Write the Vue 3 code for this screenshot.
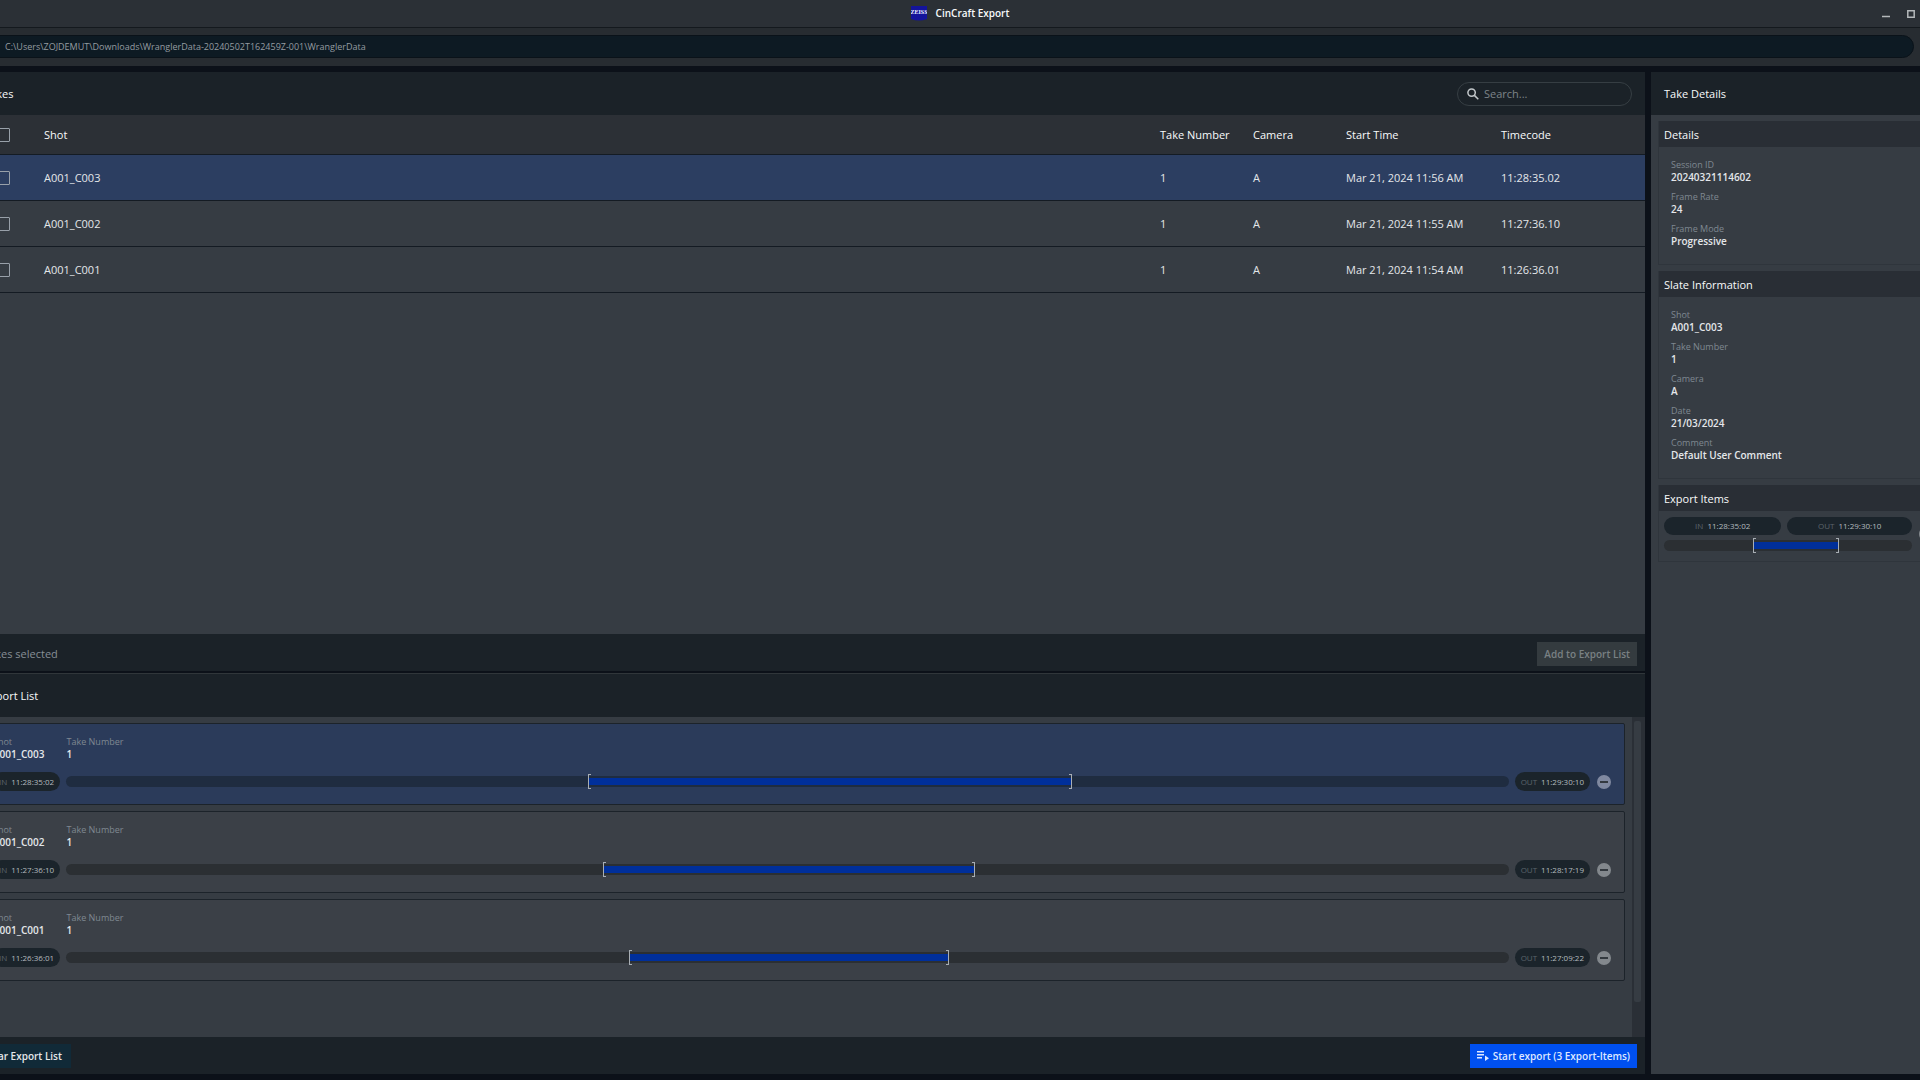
<script setup>
import { ref } from 'vue'

const path = ref('C:\\Users\\ZOJDEMUT\\Downloads\\WranglerData-20240502T162459Z-001\\WranglerData')
const search = ref('')

const takes = ref([
  { shot: 'A001_C003', take: 1, camera: 'A', start: 'Mar 21, 2024 11:56 AM', timecode: '11:28:35.02', active: true, checked: false },
  { shot: 'A001_C002', take: 1, camera: 'A', start: 'Mar 21, 2024 11:55 AM', timecode: '11:27:36.10', active: false, checked: false },
  { shot: 'A001_C001', take: 1, camera: 'A', start: 'Mar 21, 2024 11:54 AM', timecode: '11:26:36.01', active: false, checked: false },
])

const exportItems = [
  { shot: 'A001_C003', take: 1, in: '11:28:35:02', out: '11:29:30:10', left: 36.2, width: 33.5, active: true },
  { shot: 'A001_C002', take: 1, in: '11:27:36:10', out: '11:28:17:19', left: 37.2, width: 25.8, active: false },
  { shot: 'A001_C001', take: 1, in: '11:26:36:01', out: '11:27:09:22', left: 39, width: 22.2, active: false },
]

const sections = [
  {
    title: 'Details',
    fields: [
      ['Session ID', '20240321114602'],
      ['Frame Rate', '24'],
      ['Frame Mode', 'Progressive'],
    ],
  },
  {
    title: 'Slate Information',
    fields: [
      ['Shot', 'A001_C003'],
      ['Take Number', '1'],
      ['Camera', 'A'],
      ['Date', '21/03/2024'],
      ['Comment', 'Default User Comment'],
    ],
  },
]
</script>

<template>
  <div class="shell">
    <header class="titlebar">
      <div class="brand">
        <svg class="logo" viewBox="0 0 16 16" aria-hidden="true">
          <path d="M0 0h16v13q-8 3-16 0z" fill="#14149b" />
          <text x="8" y="8" text-anchor="middle" class="logo-text">ZEISS</text>
        </svg>
        <h1>CinCraft Export</h1>
      </div>
      <div class="window-buttons">
        <button type="button" aria-label="Minimize">
          <svg viewBox="0 0 10 10"><path d="M1 7.5h8" /></svg>
        </button>
        <button type="button" aria-label="Maximize">
          <svg viewBox="0 0 10 10"><path d="M1.8 1.8h6.4v6.4H1.8z" /></svg>
        </button>
        <button type="button" aria-label="Close">
          <svg viewBox="0 0 10 10"><path d="M1 1l8 8M9 1l-8 8" /></svg>
        </button>
      </div>
    </header>

    <div class="pathbar">
      <input v-model="path" class="path" type="text" aria-label="Project folder" readonly />
    </div>

    <main class="workspace">
      <div class="left">
        <section class="takes">
          <div class="panel-head">
            <h2>Takes</h2>
            <label class="search">
              <svg viewBox="0 0 12 12" aria-hidden="true">
                <circle cx="4.6" cy="4.6" r="3.7" />
                <path d="M7.4 7.4l3.9 3.9" />
              </svg>
              <input v-model="search" type="text" placeholder="Search..." aria-label="Search takes" />
            </label>
          </div>
          <div class="table-area">
            <table>
              <thead>
                <tr>
                  <th class="col-check"><input type="checkbox" aria-label="Select all takes" /></th>
                  <th>Shot</th>
                  <th class="col-narrow">Take Number</th>
                  <th class="col-narrow">Camera</th>
                  <th class="col-wide">Start Time</th>
                  <th class="col-last">Timecode</th>
                </tr>
              </thead>
              <tbody>
                <tr v-for="t in takes" :key="t.shot" :class="{ active: t.active }">
                  <td class="col-check">
                    <input v-model="t.checked" type="checkbox" :aria-label="'Select ' + t.shot" />
                  </td>
                  <td>{{ t.shot }}</td>
                  <td>{{ t.take }}</td>
                  <td>{{ t.camera }}</td>
                  <td>{{ t.start }}</td>
                  <td>{{ t.timecode }}</td>
                </tr>
              </tbody>
            </table>
          </div>
          <div class="panel-foot">
            <span class="count">0 Takes selected</span>
            <button type="button" class="btn btn-disabled" disabled>Add to Export List</button>
          </div>
        </section>

        <section class="exports">
          <div class="panel-head">
            <h2>Export List</h2>
          </div>
          <div class="list-area">
            <ul class="cards">
              <li v-for="e in exportItems" :key="e.shot" class="card" :class="{ active: e.active }">
                <dl class="meta">
                  <div><dt>Shot</dt><dd>{{ e.shot }}</dd></div>
                  <div><dt>Take Number</dt><dd>{{ e.take }}</dd></div>
                </dl>
                <div class="timeline">
                  <span class="pill"><span class="tag">IN</span>{{ e.in }}</span>
                  <div class="track">
                    <div class="range" :style="{ left: e.left + '%', width: e.width + '%' }"></div>
                  </div>
                  <span class="pill"><span class="tag">OUT</span>{{ e.out }}</span>
                  <button type="button" class="remove" :aria-label="'Remove ' + e.shot"></button>
                </div>
              </li>
            </ul>
            <div class="scrollbar"><div class="thumb"></div></div>
          </div>
          <div class="panel-foot">
            <button type="button" class="btn btn-dark">Clear Export List</button>
            <button type="button" class="btn btn-primary">
              <svg viewBox="0 0 12 12" aria-hidden="true">
                <path d="M0 1h7v1.500H0zM0 4h7v1.500H0zM0 7h5v1.500H0zM8 5.500l4 2.750-4 2.750z" />
              </svg>
              Start export (3 Export-Items)
            </button>
          </div>
        </section>
      </div>

      <aside class="right">
        <div class="panel-head"><h2>Take Details</h2></div>
        <div class="detail-body">
          <section v-for="s in sections" :key="s.title" class="box">
            <h3>{{ s.title }}</h3>
            <dl class="fields">
              <div v-for="f in s.fields" :key="f[0]"><dt>{{ f[0] }}</dt><dd>{{ f[1] }}</dd></div>
            </dl>
          </section>
          <section class="box">
            <h3>Export Items</h3>
            <div class="mini">
              <div class="mini-main">
                <div class="mini-pills">
                  <span class="pill pill-in"><span class="tag">IN</span>11:28:35:02</span>
                  <span class="pill pill-out"><span class="tag">OUT</span>11:29:30:10</span>
                </div>
                <div class="track">
                  <div class="range" :style="{ left: '36%', width: '34.500%' }"></div>
                </div>
              </div>
              <button type="button" class="remove" aria-label="Remove export item"></button>
            </div>
          </section>
        </div>
      </aside>
    </main>
  </div>
</template>

<style>
html {
  overflow: hidden;
}
body {
  margin: 0;
  background: #0c1119;
}
</style>

<style scoped>
* {
  box-sizing: border-box;
}
/* the window reaches a little past both sides of the screen */
.shell {
  display: flex;
  flex-direction: column;
  min-height: 100vh;
  margin: 0 -32px;
  background: #0c1119;
  color: #e4e7ea;
  font-family: "Segoe UI", "Open Sans", sans-serif;
  font-size: 11px;
  line-height: 14px;
}
h1, h2, h3, dl, dd, ul {
  margin: 0;
  padding: 0;
  font-size: 11px;
  font-weight: 500;
}
h1, h2, h3, th {
  color: #f8fafb;
}
ul {
  list-style: none;
}
button, input {
  font: inherit;
  color: inherit;
}

.titlebar {
  display: grid;
  grid-template-columns: 1fr auto 1fr;
  align-items: center;
  height: 28px;
  border-bottom: 1px solid #14191e;
  background: #2b3036;
}
.brand {
  grid-column: 2;
  display: flex;
  align-items: center;
  gap: 9px;
}
.brand h1 {
  font-size: 10px;
  font-weight: 600;
  line-height: 13px;
}
.logo {
  width: 16px;
  height: 16px;
}
.logo-text {
  fill: #f2f3ff;
  font-family: "Liberation Serif", serif;
  font-size: 6px;
  font-weight: 700;
}
.window-buttons {
  display: flex;
  justify-content: flex-end;
  gap: 15px;
  padding-right: 11px;
}
.window-buttons button {
  width: 10px;
  height: 10px;
  padding: 0;
  border: 0;
  background: none;
}
.window-buttons svg {
  display: block;
  fill: none;
  stroke: #b4b8bb;
  stroke-width: 1.500;
}

.pathbar {
  padding: 7px 38px 8px 6px;
  background: #272c31;
}
.path {
  display: block;
  width: 100%;
  height: 23px;
  padding: 0 30px;
  border: 1px solid #0a1219;
  border-radius: 12px;
  background: #0d1a23;
  color: #959ca1;
  font-size: 9px;
}

.workspace {
  flex: 1;
  display: flex;
  gap: 6px;
  padding: 6px;
}
.left {
  flex: 1;
  display: flex;
  flex-direction: column;
  gap: 2px;
}
.takes, .exports, .right {
  display: flex;
  flex-direction: column;
}
.takes {
  flex: 6 1 0;
}
.takes .panel-foot {
  padding-top: 2px;
}
.exports {
  flex: 4 1 0;
  border-top: 1px solid #30363a;
}
.right {
  width: 295px;
  background: #363c43;
}
.panel-head {
  display: flex;
  align-items: center;
  justify-content: space-between;
  height: 43px;
  padding: 0 13px 0 10px;
  background: #1b2228;
}
.right .panel-head {
  padding: 0 13px;
}
.panel-head h2 {
  padding-top: 1px;
}
.search {
  display: flex;
  align-items: center;
  gap: 5px;
  width: 175px;
  height: 24px;
  padding: 0 9px;
  border: 1px solid #363e43;
  border-radius: 12px;
}
.search svg {
  width: 12px;
  height: 12px;
  fill: none;
  stroke: #c3c8cb;
  stroke-width: 1.500;
}
.search input {
  flex: 1;
  min-width: 0;
  padding: 0;
  border: 0;
  outline: 0;
  background: none;
}
.search input::placeholder {
  color: #7d8488;
  opacity: 1;
}

.table-area {
  flex: 1;
  background: #363c43;
}
table {
  width: 100%;
  border-collapse: separate;
  border-spacing: 0;
  table-layout: fixed;
}
th, td {
  padding: 0;
  border-bottom: 1px solid #141b23;
  text-align: left;
}
th {
  height: 40px;
  padding-top: 1px;
  background: #2c3036;
  font-weight: 500;
}
td {
  height: 46px;
}
.active td {
  background: #2c3e61;
}
.col-check {
  width: 70px;
  padding-left: 22px;
}
.col-narrow {
  width: 93px;
}
.col-wide {
  width: 155px;
}
.col-last {
  width: 144px;
}
input[type="checkbox"] {
  display: block;
  width: 14px;
  height: 14px;
  margin: 0;
  border: 1px solid #98a0a9;
  border-radius: 1px;
  appearance: none;
}
input[type="checkbox"]:checked {
  background: #0050f0;
}

.panel-foot {
  display: flex;
  align-items: center;
  justify-content: space-between;
  height: 37px;
  padding: 0 8px 0 0;
  background: #1b2228;
}
.count {
  color: #878f96;
}
.btn {
  display: flex;
  align-items: center;
  gap: 4px;
  height: 24px;
  padding: 0 7px;
  border: 0;
  font-size: 10px;
  font-weight: 600;
}
.btn-disabled {
  background: #343b3f;
  color: #7a8184;
}
.btn-dark {
  padding: 0 9px;
  background: #112a38;
}
.btn-primary {
  background: #0050f0;
  color: #dfe8ff;
}
.btn svg {
  width: 12px;
  height: 12px;
  fill: currentColor;
}

.list-area {
  flex: 1;
  display: flex;
  background: #363c43;
}
.cards {
  flex: 1;
  display: flex;
  flex-direction: column;
  gap: 6px;
  padding: 6px 7px 6px 6px;
}
.card {
  padding: 11px 13px 13px 12px;
  border: 1px solid #1c232a;
  border-radius: 2px;
  background: #3b4047;
}
.card.active {
  background: #2b3b5a;
}
.meta {
  display: flex;
  gap: 22px;
  margin-bottom: 11px;
}
dt {
  color: #7f8891;
  font-size: 9px;
  font-weight: 400;
  line-height: 13px;
}
dd {
  font-size: 10px;
  font-weight: 600;
  line-height: 13px;
}
.timeline {
  display: flex;
  align-items: center;
  gap: 6px;
}
.pill {
  display: flex;
  align-items: center;
  justify-content: center;
  gap: 4px;
  height: 19px;
  padding: 0 6px;
  border-radius: 10px;
  background: #1b242b;
  color: #b4bbbf;
  font-size: 8px;
}
.tag {
  color: #5c656c;
}
.track {
  position: relative;
  flex: 1;
  height: 11px;
  border-radius: 6px;
  background: #2b2f33;
}
.active .track {
  background: #1f2c40;
}
/* blue span between the in and out brackets */
.range {
  position: absolute;
  top: 2px;
  bottom: 2px;
  background: #002f9b;
}
.range::before, .range::after {
  content: "";
  position: absolute;
  top: -4px;
  bottom: -4px;
  left: 0;
  width: 2px;
  border: 1px solid #a8aeb4;
  border-right: 0;
}
.range::after {
  right: 0;
  left: auto;
  border-right: 1px solid #a8aeb4;
  border-left: 0;
}
.remove {
  position: relative;
  width: 14px;
  height: 14px;
  margin-left: 1px;
  padding: 0;
  border: 0;
  border-radius: 50%;
  background: #83888d;
}
.active .remove {
  background: #8089a0;
}
.remove::before {
  content: "";
  display: block;
  height: 2px;
  margin: 0 3px;
  background: #33393f;
}
.scrollbar {
  width: 13px;
  padding: 4px 4px 35px 2px;
  background: #2a2f36;
}
.thumb {
  height: 100%;
  border-radius: 2px;
  background: #363c43;
}

.detail-body {
  display: flex;
  flex-direction: column;
  gap: 6px;
  padding: 6px 6px 6px 7px;
}
.box {
  border: 1px solid #2f353c;
  border-top: 0;
}
.box h3 {
  padding: 7px 6px 5px 5px;
  background: #292e35;
}
.fields {
  display: flex;
  flex-direction: column;
  gap: 6px;
  padding: 11px 12px 16px;
}
.mini {
  display: flex;
  align-items: center;
  gap: 6px;
  padding: 6px 6px 10px 5px;
}
.mini-main {
  flex: 1;
  display: flex;
  flex-direction: column;
  gap: 5px;
}
.mini .track {
  flex: none;
}
.mini-pills {
  display: flex;
  gap: 6px;
}
.mini .pill {
  height: 18px;
}
.pill-in {
  flex: 117;
}
.pill-out {
  flex: 125;
}
</style>
